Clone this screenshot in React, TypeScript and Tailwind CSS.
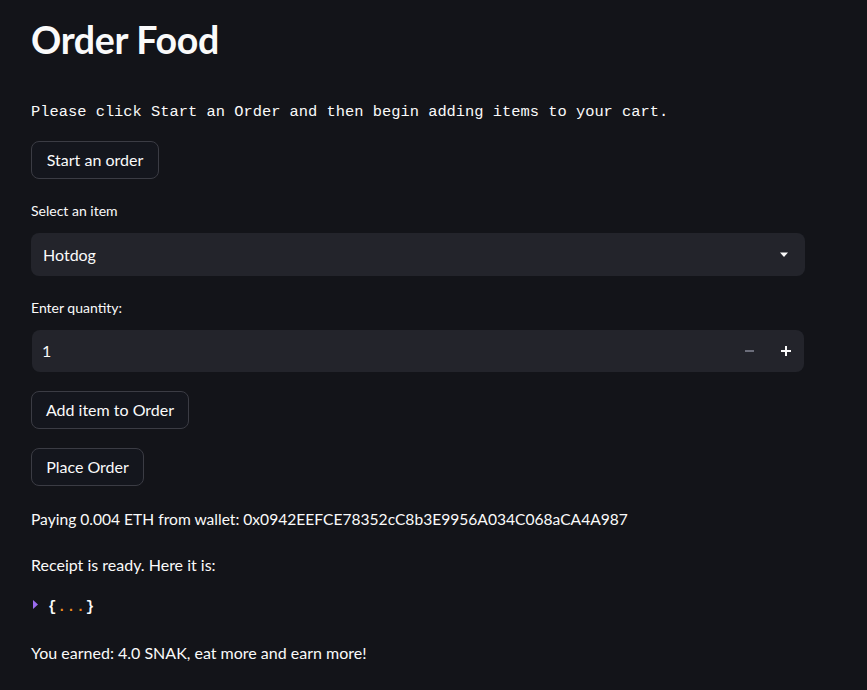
import { useState } from "react"

const sans = { fontFamily: '"Source Sans Pro", Lato, "Noto Sans", sans-serif' }

function Btn({ label, w }: { label: string; w: string }) {
  return (
    <button
      className={`h-[38px] ${w} rounded-lg border border-[#3b3c44] bg-[#14161d] px-3 text-[16px] text-[#fafafa]`}
    >
      {label}
    </button>
  )
}

export default function App() {
  const [qty, setQty] = useState(1)

  return (
    <div className="min-h-[690px] w-full bg-[#131419] text-[#fafafa]" style={sans}>
      <div className="w-[805px] pl-[31px] pt-[17px]">
        <h1 className="text-[37.5px] font-bold leading-[46px] tracking-[-0.3px]">Order Food</h1>

        <p className="mt-[39px] font-['Liberation_Mono',monospace] text-[15.4px] leading-[20px]">
          Please click Start an Order and then begin adding items to your cart.
        </p>

        <div className="mt-[19px]">
          <Btn label="Start an order" w="w-[128px]" />
        </div>

        <div className="mt-[22px] text-[14px] leading-[20px]">Select an item</div>
        <div className="mt-[12px] flex h-[43px] items-center justify-between rounded-lg bg-[#23242b] pl-3 pr-4">
          <span className="text-[16px]">Hotdog</span>
          <svg width="10" height="6" viewBox="0 0 10 6">
            <path d="M1 0.5h8L5 5z" fill="#fafafa" />
          </svg>
        </div>

        <div className="mt-[22px] text-[14px] leading-[20px]">Enter quantity:</div>
        <div className="ml-px mr-px mt-[12px] flex h-[42px] items-center justify-between rounded-lg bg-[#23242b] pl-[10px] pr-[13px]">
          <span className="text-[16px]">{qty}</span>
          <div className="flex items-center gap-[26px]">
            <button onClick={() => setQty(Math.max(1, qty - 1))} className="flex h-4 w-[10px] items-center">
              <span className="block h-[2px] w-[9px] bg-[#6b6d7a]" />
            </button>
            <button onClick={() => setQty(qty + 1)} className="relative h-[10px] w-[10px]">
              <span className="absolute left-0 top-[4px] h-[2px] w-[10px] bg-[#fafafa]" />
              <span className="absolute left-[4px] top-0 h-[10px] w-[2px] bg-[#fafafa]" />
            </button>
          </div>
        </div>

        <div className="mt-[19px]">
          <Btn label="Add item to Order" w="w-[158px]" />
        </div>
        <div className="mt-[19px]">
          <Btn label="Place Order" w="w-[113px]" />
        </div>

        <p className="mt-[21px] text-[15.6px] leading-[24px]">
          Paying 0.004 ETH from wallet: 0x0942EEFCE78352cC8b3E9956A034C068aCA4A987
        </p>
        <p className="mt-[22px] text-[16px] leading-[24px]">Receipt is ready. Here it is:</p>

        <div className="mt-[20px] flex items-center gap-[10px] pl-[2px] font-['Liberation_Mono',monospace] text-[14px] font-bold leading-[20px]">
          <svg width="5" height="9" viewBox="0 0 5 9" className="-mt-[6px]">
            <path d="M0 0l5 4.5L0 9z" fill="#9b6cf0" />
          </svg>
          <span className="tracking-[1px]">
            {"{"}
            <span className="text-[#f08c1e]">...</span>
            {"}"}
          </span>
        </div>

        <p className="mt-[24px] text-[16px] leading-[24px]">You earned: 4.0 SNAK, eat more and earn more!</p>
      </div>
    </div>
  )
}
